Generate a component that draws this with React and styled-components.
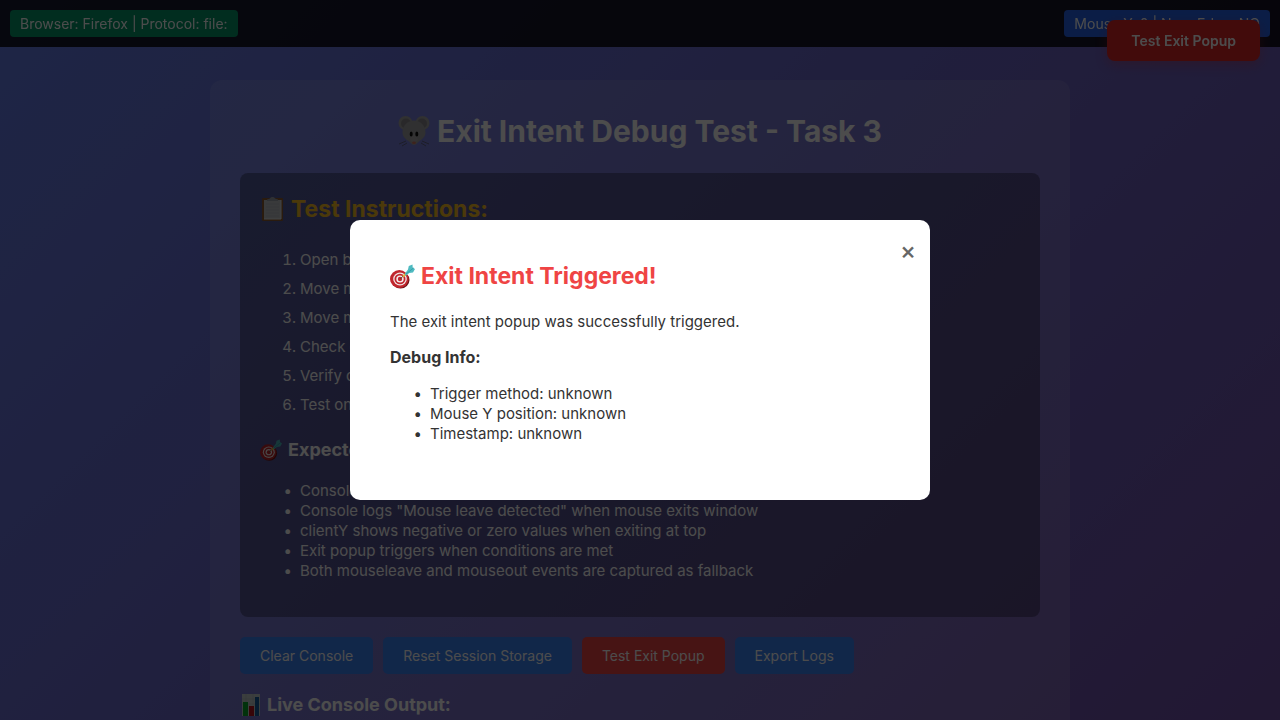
import React, { useState } from "react";
import styled, { createGlobalStyle, css } from "styled-components";

const GlobalStyle = createGlobalStyle`
  * { box-sizing: border-box; }
  body {
    margin: 0;
    min-height: 100vh;
    background: linear-gradient(135deg, #667eea 0%, #764ba2 100%);
    color: #fff;
    font-family: Inter, "Liberation Sans", sans-serif;
    font-size: 15px;
    line-height: 20px;
  }
  button { font-family: inherit; cursor: pointer; }
`;

const StatusBar = styled.header`
  position: fixed;
  top: 0;
  left: 0;
  right: 0;
  display: flex;
  justify-content: space-between;
  padding: 10px;
  background: rgba(0, 0, 0, 0.8);
`;

const StatusChip = styled.span`
  padding: 5px 10px;
  border-radius: 4px;
  font-size: 14px;
  line-height: 17px;
  background: ${(p) => p.$color};
`;

const FloatingButton = styled.button`
  position: fixed;
  top: 20px;
  right: 20px;
  padding: 12px 24px;
  border: 0;
  border-radius: 8px;
  background: #dc2626;
  color: #fff;
  font-size: 14px;
  font-weight: 600;
  line-height: 17px;
  box-shadow: 0 4px 12px rgba(220, 38, 38, 0.3);
`;

const Page = styled.main`
  padding: 80px 20px 20px;
`;

const Container = styled.div`
  max-width: 860px;
  margin: 0 auto;
  padding: 30px;
  border-radius: 12px;
  background: rgba(255, 255, 255, 0.1);
`;

const Title = styled.h1`
  display: flex;
  justify-content: center;
  align-items: center;
  gap: 7px;
  margin: 0 0 21px;
  font-size: 30px;
  line-height: 42px;
`;

const SectionTitle = styled.h2`
  display: flex;
  align-items: center;
  gap: 6px;
  margin: 0 0 20px;
  color: ${(p) => p.$color};
  font-size: 23px;
  line-height: 32px;
`;

const SubTitle = styled.h3`
  display: flex;
  align-items: center;
  gap: 6px;
  margin: 20px 0;
  font-size: 18px;
  line-height: 22px;
`;

const Instructions = styled.section`
  padding: 20px;
  border-radius: 8px;
  background: rgba(0, 0, 0, 0.3);
`;

const listBase = css`
  margin: 0 0 16px;
  padding-left: 40px;
`;

const StepList = styled.ol`
  ${listBase}
  line-height: 29px;
`;

const BulletList = styled.ul`
  ${listBase}
  line-height: 20px;

  li::marker {
    content: "•\\00a0\\00a0";
  }
`;

const ButtonRow = styled.div`
  display: flex;
  flex-wrap: wrap;
  gap: 10px;
  margin: 20px 0;
`;

const ActionButton = styled.button`
  padding: 10px 20px;
  border: 0;
  border-radius: 5px;
  background: ${(p) => (p.$danger ? "#ef4444" : "#3b82f6")};
  color: #fff;
  font-size: 14px;
  line-height: 17px;
`;

const ConsolePanel = styled.div`
  min-height: 200px;
  padding: 15px;
  border-radius: 8px;
  background: #000;
`;

const Overlay = styled.div`
  position: fixed;
  inset: 0;
  display: flex;
  align-items: center;
  justify-content: center;
  padding: 20px;
  background: rgba(0, 0, 0, 0.7);
`;

const Dialog = styled.div`
  position: relative;
  width: 100%;
  max-width: 580px;
  padding: 40px;
  border-radius: 10px;
  background: #fff;
  color: #333;
`;

const Paragraph = styled.p`
  margin: 0 0 16px;
`;

const Label = styled.strong`
  font-size: 16px;
  line-height: 16px;
`;

const CloseButton = styled.button`
  position: absolute;
  top: 16px;
  right: 14px;
  padding: 0;
  border: 0;
  background: none;
  color: #666;
  font-size: 24px;
  font-weight: 500;
  line-height: 30px;
`;

const Icon = styled.svg`
  flex: none;
  display: block;
`;

function MouseIcon() {
  return (
    <Icon width="32" height="32" viewBox="0 0 32 32" aria-hidden="true">
      <circle cx="7.500" cy="8" r="7" fill="#a3a3a6" />
      <circle cx="24.500" cy="8" r="7" fill="#a3a3a6" />
      <circle cx="8" cy="8.500" r="5" fill="#8b888c" />
      <circle cx="24" cy="8.500" r="5" fill="#8b888c" />
      <path d="M16 5.500c6.500 0 11.500 5 11.500 12 0 4-3 6.500-6 8.500-2 1.500-3 4-5.500 4s-3.500-2.500-5.500-4c-3-2-6-4.500-6-8.500 0-7 5-12 11.500-12z" fill="#a0a0a3" />
      <path d="M16 19c2 0 3 3 4 5 .5 1.500-2 2.500-4 4-2-1.500-4.500-2.500-4-4 1-2 2-5 4-5z" fill="#aaa8aa" />
      <ellipse cx="13.200" cy="19" rx="1.500" ry="2.600" fill="#111" />
      <ellipse cx="18.800" cy="19" rx="1.500" ry="2.600" fill="#111" />
      <ellipse cx="16" cy="27.800" rx="2" ry="1.300" fill="#cf7460" />
      <path d="M8 26L1 29M9 28l-5 3M24 26l7 3M23 28l5 3" stroke="#56565e" strokeWidth=".7" fill="none" />
    </Icon>
  );
}

function ClipboardIcon() {
  return (
    <Icon width="25" height="25" viewBox="0 0 25 25" aria-hidden="true">
      <rect x="2" y="1" width="21" height="23" rx="1" fill="#8d5a30" />
      <path d="M4 3h17v19H4z" fill="#bfc2c6" />
      <path d="M6 7h13M6 10h13M6 13h13M6 16h13M6 19h13" stroke="#aeb3b9" strokeWidth=".7" />
      <path d="M21 3v19H4" fill="none" stroke="#e2e5e8" strokeWidth="1" />
      <path d="M7 4V2.500l3-1C10.500-.5 14.500-.5 15 1.500l3 1V4z" fill="#9ba1aa" />
    </Icon>
  );
}

function TargetIcon({ size }) {
  return (
    <Icon width={size} height={size} viewBox="0 0 25 25" aria-hidden="true">
      <ellipse cx="10.500" cy="16" rx="9" ry="8.600" fill="#6e1518" />
      <ellipse cx="9.300" cy="15" rx="9.300" ry="8.900" fill="#c0262d" />
      <ellipse cx="10" cy="15" rx="6.800" ry="6.500" fill="#f0e8e6" />
      <ellipse cx="10" cy="15" rx="5.500" ry="5.200" fill="#c2272f" />
      <ellipse cx="10" cy="15" rx="3.700" ry="3.500" fill="#f5eeee" />
      <circle cx="10" cy="15" r="2.200" fill="#c2272f" />
      <path d="M10 15l5-4.500" stroke="#634c38" strokeWidth="1" />
      <path d="M13 12.500l4-3.500" stroke="#e5b43b" strokeWidth="2" />
      <path d="M15 9.500l3-4 .8-3.500L22.500.500l.2 3L25 5l-2 3.500-3.800.5-3.500 3z" fill="#4ebac0" />
      <path d="M16 10L23.500 4" stroke="#2f95a2" strokeWidth=".8" />
    </Icon>
  );
}

function ChartIcon() {
  return (
    <Icon width="21" height="22" viewBox="0 0 21 22" aria-hidden="true">
      <path d="M2 0h18v22H2z" fill="#c5cfd0" />
      <path d="M2 5h18M2 10h18M2 15h18M6 0v22M13 0v22" stroke="#aebbbd" strokeWidth=".6" />
      <path d="M3 8h5v14H3z" fill="#07a829" />
      <path d="M9 12h5v10H9z" fill="#b8121c" />
      <path d="M15 3h4v19h-4z" fill="#165a9e" />
    </Icon>
  );
}

const steps = [
  "Open browser console",
  "Move mouse around the page",
  "Move mouse to the top",
  "Check console messages",
  "Verify clientY values",
  "Test on other browsers",
];

const expected = [
  "Console logs show mouse position near top edge",
  'Console logs "Mouse leave detected" when mouse exits window',
  "clientY shows negative or zero values when exiting at top",
  "Exit popup triggers when conditions are met",
  "Both mouseleave and mouseout events are captured as fallback",
];

const debugInfo = [
  "Trigger method: unknown",
  "Mouse Y position: unknown",
  "Timestamp: unknown",
];

export default function App() {
  const [open, setOpen] = useState(true);
  const show = () => setOpen(true);

  return (
    <>
      <GlobalStyle />
      <Page>
        <Container>
          <Title><MouseIcon />Exit Intent Debug Test - Task 3</Title>
          <Instructions>
            <SectionTitle $color="#fbbf24"><ClipboardIcon />Test Instructions:</SectionTitle>
            <StepList>{steps.map((s) => <li key={s}>{s}</li>)}</StepList>
            <SubTitle><TargetIcon size={22} />Expected Results:</SubTitle>
            <BulletList>{expected.map((s) => <li key={s}>{s}</li>)}</BulletList>
          </Instructions>
          <ButtonRow>
            <ActionButton type="button">Clear Console</ActionButton>
            <ActionButton type="button">Reset Session Storage</ActionButton>
            <ActionButton type="button" $danger onClick={show}>Test Exit Popup</ActionButton>
            <ActionButton type="button">Export Logs</ActionButton>
          </ButtonRow>
          <SubTitle><ChartIcon />Live Console Output:</SubTitle>
          <ConsolePanel />
        </Container>
      </Page>
      <StatusBar>
        <StatusChip $color="#059669">Browser: Firefox | Protocol: file:</StatusChip>
        <StatusChip $color="#2563eb">Mouse Y: 0 | Near Edge: NO</StatusChip>
      </StatusBar>
      <FloatingButton type="button" onClick={show}>Test Exit Popup</FloatingButton>
      {open && (
        <Overlay>
          <Dialog role="dialog" aria-modal="true" aria-labelledby="exit-title">
            <CloseButton type="button" aria-label="Close" onClick={() => setOpen(false)}>×</CloseButton>
            <SectionTitle id="exit-title" $color="#ef4444"><TargetIcon size={25} />Exit Intent Triggered!</SectionTitle>
            <Paragraph>The exit intent popup was successfully triggered.</Paragraph>
            <Paragraph><Label>Debug Info:</Label></Paragraph>
            <BulletList>{debugInfo.map((s) => <li key={s}>{s}</li>)}</BulletList>
          </Dialog>
        </Overlay>
      )}
    </>
  );
}
